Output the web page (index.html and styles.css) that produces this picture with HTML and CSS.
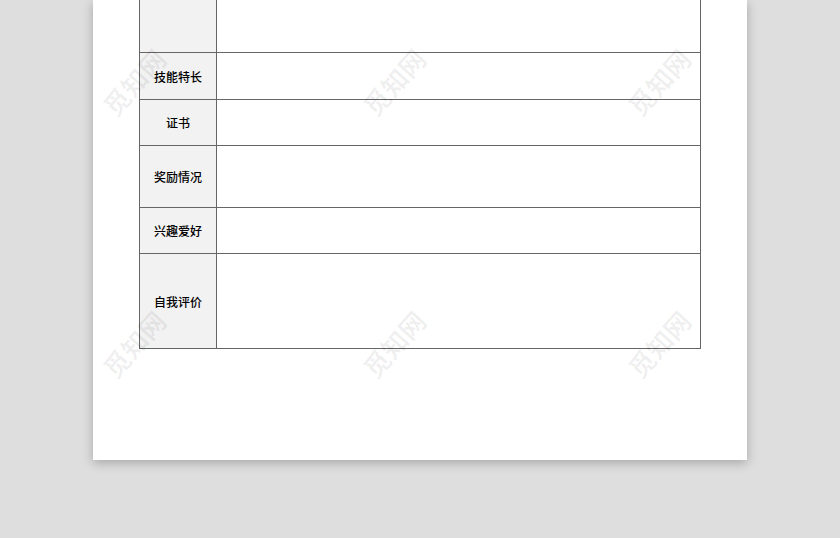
FILE: index.html
```html
<!DOCTYPE html>
<html lang="zh">
<head>
<meta charset="utf-8">
<link rel="stylesheet" href="styles.css">
</head>
<body>
<div class="page">
  <div class="table">
    <div class="row r1"><div class="label"></div><div class="value"></div></div>
    <div class="row r2"><div class="label">技能特长</div><div class="value"></div></div>
    <div class="row r3"><div class="label">证书</div><div class="value"></div></div>
    <div class="row r4"><div class="label">奖励情况</div><div class="value"></div></div>
    <div class="row r5"><div class="label">兴趣爱好</div><div class="value"></div></div>
    <div class="row r6"><div class="label">自我评价</div><div class="value"></div></div>
  </div>
  <div class="wm w1">觅知网</div>
  <div class="wm w2">觅知网</div>
  <div class="wm w3">觅知网</div>
  <div class="wm w4">觅知网</div>
  <div class="wm w5">觅知网</div>
  <div class="wm w6">觅知网</div>
</div>
</body>
</html>
```
FILE: styles.css
```css
html, body {
  margin: 0;
  padding: 0;
}
body {
  background: #dedede;
  width: 840px;
  height: 538px;
  overflow: hidden;
  font-family: "Noto Sans CJK SC", "Noto Sans", sans-serif;
}
.page {
  position: relative;
  margin-left: 93px;
  width: 654px;
  height: 460px;
  background: #fff;
  box-shadow: 0 3px 10px rgba(0, 0, 0, 0.25);
}
.table {
  margin-left: 46px;
  width: 562px;
  border-left: 1px solid #666;
  border-right: 1px solid #666;
  box-sizing: border-box;
  display: flex;
  flex-direction: column;
}
.row {
  display: grid;
  grid-template-columns: 77px 1fr;
  border-bottom: 1px solid #666;
}
.label {
  background: #f2f2f2;
  border-right: 1px solid #666;
  display: flex;
  align-items: center;
  justify-content: center;
  font-size: 12px;
  font-weight: 500;
  color: #000;
}
.r1 { height: 52px; }
.r2 { height: 46px; }
.r3 { height: 45px; }
.r4 { height: 61px; }
.r5 { height: 45px; }
.r6 { height: 94px; }
.wm {
  position: absolute;
  font-size: 26px;
  line-height: 26px;
  font-weight: 700;
  color: rgba(0, 0, 0, 0.06);
  transform: translate(-50%, -50%) rotate(-48deg);
  white-space: nowrap;
}
.w1 { left: 41px; top: 82px; }
.w2 { left: 301px; top: 82px; }
.w3 { left: 566px; top: 82px; }
.w4 { left: 41px; top: 344px; }
.w5 { left: 301px; top: 344px; }
.w6 { left: 566px; top: 344px; }
```
